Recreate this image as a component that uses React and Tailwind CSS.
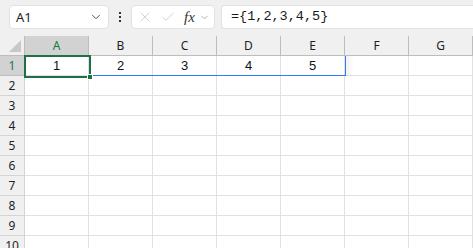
import { ChevronDown, X, Check } from 'lucide-react'

const COLS = ['A', 'B', 'C', 'D', 'E', 'F', 'G']
const ROWS = [1, 2, 3, 4, 5, 6, 7, 8, 9, 10]
const ui = { fontFamily: '"Noto Sans", "Open Sans", sans-serif' }
const cellFont = { fontFamily: '"Liberation Sans", Arial, sans-serif' }

function Toolbar() {
  return (
    <div className="h-[36px] bg-[#f0f0f0] flex items-start pt-[5px] pl-[9px]" style={ui}>
      <div className="w-[100px] h-[24px] bg-white rounded-[4px] border border-[#e2e2e2] flex items-center justify-between pl-[6px] pr-[5px]">
        <span className="text-[13px] text-[#1f1f1f] leading-none">A1</span>
        <ChevronDown size={14} strokeWidth={1.5} className="text-[#444]" />
      </div>
      <div className="w-[22px] h-[24px] flex flex-col items-center justify-center gap-[2px]">
        <span className="w-[2px] h-[2px] bg-[#333]" />
        <span className="w-[2px] h-[2px] bg-[#333]" />
        <span className="w-[2px] h-[2px] bg-[#333]" />
      </div>
      <div className="w-[84px] h-[24px] bg-white rounded-[4px] border border-[#e2e2e2] flex items-center pl-[5px]">
        <X size={16} strokeWidth={1.1} className="text-[#c2c2c2]" />
        <Check size={16} strokeWidth={1.1} className="text-[#c2c2c2] ml-[7px]" />
        <span className="ml-[8px] text-[15px] italic text-[#333] leading-none" style={{ fontFamily: '"Liberation Serif", serif' }}>fx</span>
        <ChevronDown size={11} strokeWidth={1.4} className="text-[#888] ml-[4px]" />
      </div>
      <div className="flex-1 ml-[6px] h-[24px] bg-white rounded-l-[4px] border border-r-0 border-[#e2e2e2] flex items-center pl-[9px]">
        <span className="text-[13.5px] text-[#1a1a1a] leading-none" style={{ fontFamily: '"Liberation Mono", monospace' }}>={'{'}1,2,3,4,5{'}'}</span>
      </div>
    </div>
  )
}

function Grid() {
  return (
    <div className="relative grid grid-cols-[25px_repeat(7,64px)] auto-rows-[20px] bg-white" style={ui}>
      <div className="bg-[#f0f0f0] border-r border-b border-[#bdbdbd] relative">
        <div className="absolute right-[3px] bottom-[3px] w-0 h-0 border-l-[12px] border-l-transparent border-b-[12px] border-b-[#c8c8c8]" />
      </div>
      {COLS.map((c, i) => (
        <div
          key={c}
          className={
            i === 0
              ? 'bg-[#d2d2d2] border-r border-b border-[#bdbdbd] flex items-center justify-center text-[12px] text-[#107c41]'
              : 'bg-[#f0f0f0] border-r border-b border-[#bdbdbd] flex items-center justify-center text-[12px] text-[#1f1f1f]'
          }
        >
          {c}
        </div>
      ))}
      {ROWS.map((r) => (
        <Row key={r} r={r} />
      ))}
      {/* spill range border */}
      <div className="absolute z-10 left-[90px] top-[39px] w-[256px] h-px bg-blue-500 pointer-events-none" />
      <div className="absolute z-10 left-[345px] top-[20px] w-px h-[20px] bg-blue-500 pointer-events-none" />
      <div className="absolute left-[346px] top-[20px] w-[8px] h-[20px] bg-gradient-to-r from-black/5 to-transparent pointer-events-none" />
      {/* active cell */}
      <div className="absolute z-20 left-[24px] top-[19px] w-[67px] h-[23px] border-2 border-[#1e7145] pointer-events-none" />
      <div className="absolute z-20 left-[87px] top-[38px] w-[6px] h-[6px] bg-[#1e7145] border border-white pointer-events-none" />
    </div>
  )
}

function Row({ r }) {
  const vals = r === 1 ? ['1', '2', '3', '4', '5', '', ''] : ['', '', '', '', '', '', '']
  return (
    <>
      <div
        className={
          r === 1
            ? 'bg-[#d2d2d2] border-r border-b border-[#bdbdbd] flex items-center justify-center text-[12px] text-[#107c41]'
            : 'bg-[#f0f0f0] border-r border-b border-[#d4d4d4] flex items-center justify-center text-[12px] text-[#1f1f1f]'
        }
      >
        {r}
      </div>
      {vals.map((v, i) => (
        <div key={i} className="border-r border-b border-[#e1e1e1] flex items-center justify-center text-[13px] text-[#111]" style={cellFont}>
          {v}
        </div>
      ))}
    </>
  )
}

export default function App() {
  return (
    <div className="w-[473px] h-[248px] overflow-hidden bg-white">
      <Toolbar />
      <Grid />
    </div>
  )
}
